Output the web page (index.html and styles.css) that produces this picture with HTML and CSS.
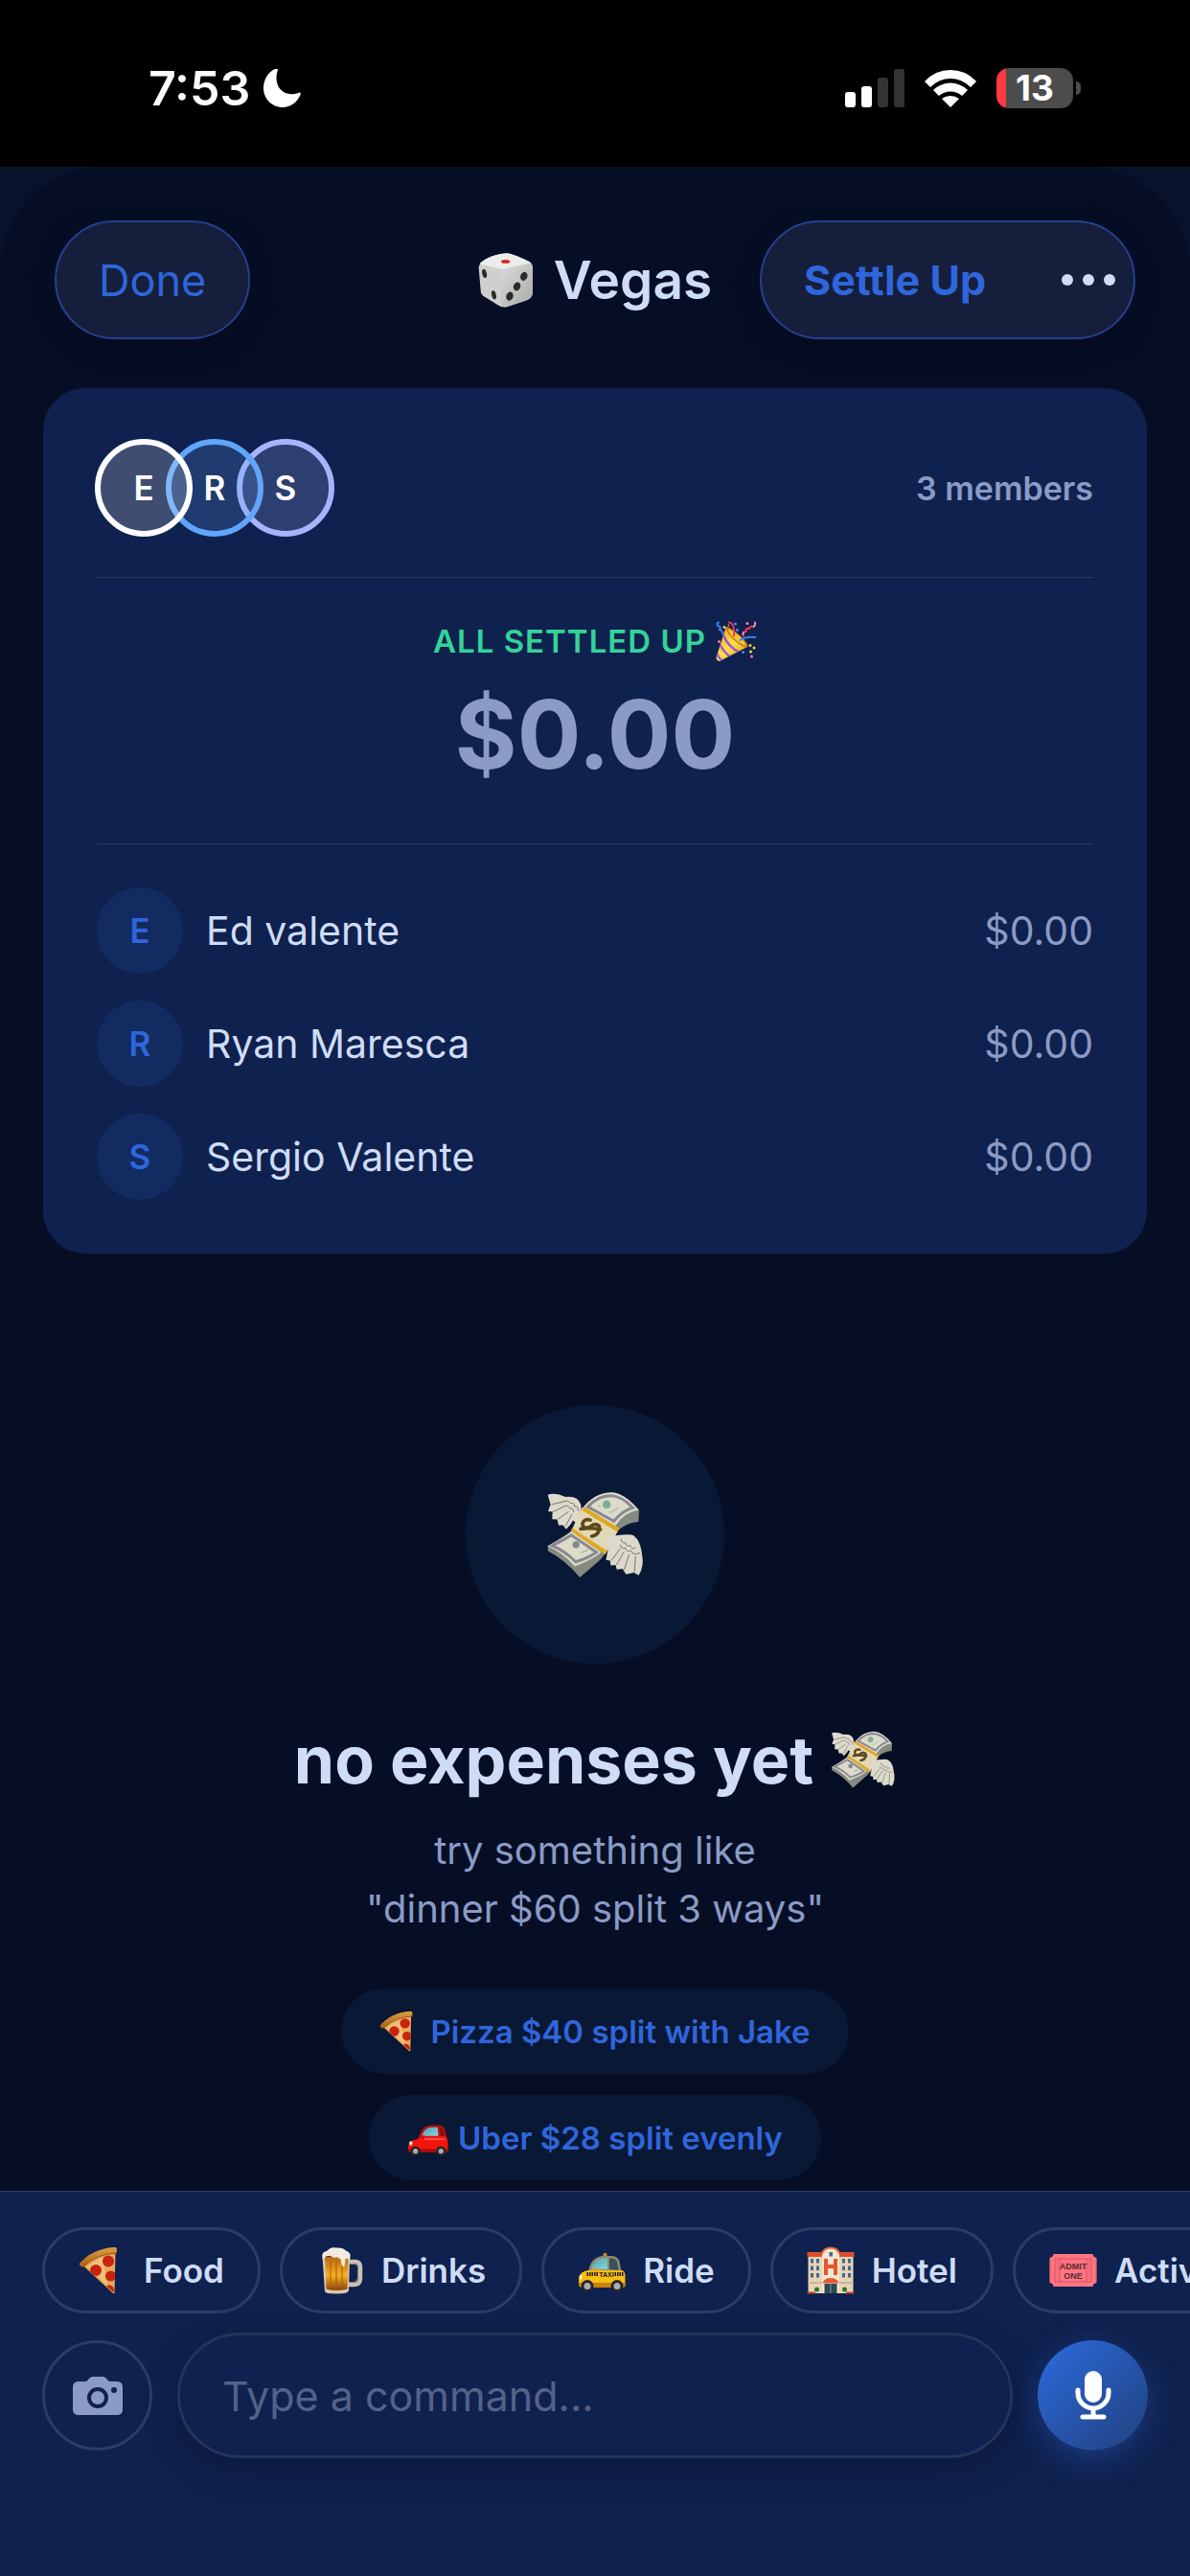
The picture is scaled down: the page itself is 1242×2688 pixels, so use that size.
FILE: index.html
```
<!DOCTYPE html>
<html lang="en">
<head>
  <meta charset="UTF-8">
  <meta name="viewport" content="width=device-width, initial-scale=1">
  <title>Vegas</title>
  <link rel="stylesheet" href="styles.css">
</head>
<body>

<!-- emoji sprites -->
<svg class="sprites" aria-hidden="true">
  <defs>
    <linearGradient id="g-crust" x1="0" y1="0" x2="0" y2="1"><stop offset="0" stop-color="#e0a040"/><stop offset="1" stop-color="#a85d14"/></linearGradient>
    <linearGradient id="g-beer" x1="0" y1="0" x2="0" y2="1"><stop offset="0" stop-color="#b8690f"/><stop offset=".55" stop-color="#f7b124"/><stop offset="1" stop-color="#8a4208"/></linearGradient>
    <linearGradient id="g-glass" x1="0" y1="0" x2="1" y2="1"><stop offset="0" stop-color="#49a5b5"/><stop offset="1" stop-color="#8fd3da"/></linearGradient>
    <linearGradient id="g-cone" x1="0" y1="0" x2="1" y2="1"><stop offset="0" stop-color="#e09a1c"/><stop offset=".5" stop-color="#ffe14a"/><stop offset="1" stop-color="#d68f18"/></linearGradient>
    <linearGradient id="g-die" x1="0" y1="0" x2="1" y2="1"><stop offset="0" stop-color="#dcdcdb"/><stop offset="1" stop-color="#a9a9a8"/></linearGradient>
    <clipPath id="c-pizza"><path d="M7 38Q38 13 77 12L75 98z"/></clipPath>
    <clipPath id="c-cone"><path d="M21 14Q50 22 66 54L8 84Q1 82 1 76z"/></clipPath>
  </defs>

  <symbol id="money" viewBox="395 324 310 310">
    <path fill="#858a80" d="M400 514L401 530Q455 558 501 613L555 566Q570 556 584 532L622 464Q650 440 685 438L687 402L600 346L515 392L472 470z"/>
    <path fill="#dcdcc9" d="M400 514Q448 492 474 468L568 534Q540 558 485 578Q446 534 400 514z"/>
    <path fill="none" stroke="#8b8794" stroke-width="9" d="M414 513Q450 496 474 480L553 534Q528 552 488 564Q455 530 414 513z"/>
    <path fill="#dcdcc9" d="M512 392Q550 346 600 346Q640 347 686 401Q640 408 612 452z"/>
    <path fill="none" stroke="#8b8794" stroke-width="9" d="M526 391Q556 356 599 356Q634 359 667 394Q632 405 608 436z"/>
    <circle cx="489" cy="510" r="11" fill="#85868a"/>
    <circle cx="585" cy="384" r="13" fill="#7bb096"/>
    <path stroke="#8aac95" stroke-width="3" d="M505 535l22-8M596 410l26-16M566 392l-8-6"/>
    <path fill="#dfd9b8" d="M508 392L624 460L581 540L474 468z"/>
    <path fill="#e2a81f" d="M514 391L625 459L617 469L508 402zM477 458L585 529L579 540L473 468z"/>
    <path fill="none" stroke="#5f471b" stroke-width="11" stroke-linecap="round" d="M531 433Q511 429 508 447Q512 466 532 455Q548 438 561 449Q566 477 541 483M504 464Q536 456 566 459" transform="rotate(6 535 457)"/>
    <path fill="#dedacb" d="M400 353Q425 346 456 360Q495 356 504 384Q507 405 490 442L479 434L472 446L458 462L448 449L434 449L430 431L414 430L415 407L401 405L409 384z"/>
    <path fill="none" stroke="#77776f" stroke-width="3" d="M450 374q14-6 22 6q12-3 12 10q14-2 11 14M453 389q12-5 17 8q12-3 11 12M412 384l42-10M416 407l38-18M432 430l34-24M456 452l20-38"/>
    <path fill="#dedacb" d="M588 486Q634 476 664 479Q690 490 696 540Q704 576 686 606L670 598L646 603L635 586L617 588L613 574L598 575L596 560L583 558L590 522z"/>
    <path fill="none" stroke="#77776f" stroke-width="3" d="M630 492q4 16 14 11q2 17 15 9q4 16 17 7M628 510q4 16 16 10q4 16 16 8q10 18 30 8M600 560l28-38M616 574l24-42M640 590l16-50M672 598l4-52"/>
  </symbol>

  <symbol id="dice" viewBox="118 72 176 176">
    <path fill="#cfcfce" d="M124 110Q150 82 208 76Q224 76 280 102Q292 108 291 126V202Q288 220 270 225L208 246Q190 248 178 238L136 212Q126 206 126 192L120 122Q120 116 124 110z"/>
    <path fill="#ececeb" d="M124 107Q150 82 208 76Q224 76 282 104Q284 108 270 111L212 123Q196 128 186 124L126 111z"/>
    <path fill="url(#g-die)" d="M190 142Q192 129 206 125L276 109Q291 107 291 124V202Q288 220 270 225L208 246Q190 246 189 234z"/>
    <ellipse cx="205" cy="102" rx="14" ry="6" fill="#e0201c"/>
    <g fill="#2b2b2b">
      <ellipse cx="138" cy="140" rx="7" ry="14" transform="rotate(-14 138 140)"/>
      <ellipse cx="168" cy="208" rx="7" ry="14" transform="rotate(-14 168 208)"/>
      <ellipse cx="263" cy="149" rx="11" ry="14" transform="rotate(20 263 149)"/>
      <ellipse cx="241" cy="181" rx="11" ry="14" transform="rotate(20 241 181)"/>
      <ellipse cx="218" cy="212" rx="11" ry="14" transform="rotate(20 218 212)"/>
    </g>
  </symbol>

  <symbol id="pizza" viewBox="0 0 100 100">
    <path fill="#e9ab57" d="M7 38Q38 13 77 12L75 98Q73 100 70 96z"/>
    <path fill="#f0c07c" d="M18 42L50 22L60 82z"/>
    <g fill="#c8230f" clip-path="url(#c-pizza)">
      <circle cx="62" cy="31" r="12"/><circle cx="36" cy="50" r="12"/><circle cx="67" cy="62" r="11"/><circle cx="64" cy="91" r="10"/>
    </g>
    <path fill="url(#g-crust)" d="M1 37Q28 5 74 2Q80 1 80 6V13Q40 14 12 41Q9 44 6 43z"/>
    <path fill="none" stroke="#8d4b10" stroke-width="2" d="M12 41Q40 15 80 14"/>
  </symbol>

  <symbol id="beer" viewBox="0 0 100 100">
    <path fill="none" stroke="#c9bfb4" stroke-width="9" d="M66 32H82Q92 33 92 43V66Q92 79 80 80H66"/>
    <path fill="none" stroke="#8c8177" stroke-width="2" d="M68 37H80Q87 38 87 45V65Q86 74 78 75H68"/>
    <path fill="#d8c9b6" d="M13 22H70L68 92Q68 99 42 99Q18 99 18 94z"/>
    <path fill="url(#g-beer)" d="M18 22H67L65 89Q42 95 21 89z"/>
    <path stroke="#a35a0c" stroke-width="2" d="M30 30V86M42 30V88M54 30V86"/>
    <path fill="#f1ebe2" d="M13 24Q10 12 22 10Q30 0 42 3Q56 2 62 9Q74 13 71 24Q70 31 66 27Q64 23 61 27Q60 45 56 42Q52 40 52 28Q44 20 38 24Q26 17 18 23Q15 30 13 24z"/>
  </symbol>

  <symbol id="car" viewBox="0 0 100 100">
    <path fill="#b60d0b" d="M26 54Q34 20 60 20H76Q92 20 94 40L97 58z"/>
    <path fill="url(#g-glass)" d="M34 48Q42 26 58 25H74L76 48z"/>
    <path fill="#6b1413" d="M80 25Q88 28 89 48H82z"/>
    <path fill="#f5130d" d="M2 72Q4 56 24 54L38 46H92Q99 50 99 64V82Q98 86 90 86H8Q1 84 2 76z"/>
    <path fill="#a60b08" d="M2 78H99V82Q98 86 90 86H8Q1 84 2 78z"/>
    <path stroke="#ff7a70" stroke-width="3" stroke-linecap="round" d="M42 54H90"/>
    <g fill="#24262a"><circle cx="20" cy="83" r="12"/><circle cx="82" cy="83" r="12"/></g>
    <g fill="#a9adb1"><circle cx="20" cy="83" r="6"/><circle cx="82" cy="83" r="6"/></g>
    <ellipse cx="38" cy="49" rx="5" ry="4" fill="#d30f0c"/>
    <ellipse cx="9" cy="64" rx="4" ry="5" fill="#ffe3df"/>
  </symbol>

  <symbol id="hotel" viewBox="0 0 100 100">
    <path fill="#e9d3b6" d="M3 20H97V98H3z"/>
    <path fill="#d9502a" d="M1 12H34V22H1zM66 12H99V22H66z"/>
    <path fill="#f5e6d0" d="M32 98V14Q36 2 50 2Q64 2 68 14V98z"/>
    <path fill="none" stroke="#e0613a" stroke-width="4" d="M31 16Q36 3 50 3Q64 3 69 16"/>
    <path fill="#3c6d8f" d="M8 26h6v9H8zM20 26h6v9h-6zM74 26h6v9h-6zM86 26h6v9h-6zM8 41h6v9H8zM20 41h6v9h-6zM74 41h6v9h-6zM86 41h6v9h-6zM8 56h6v9H8zM20 56h6v9h-6zM74 56h6v9h-6zM86 56h6v9h-6zM47 12h7v9h-7z"/>
    <path fill="none" stroke="#e4552f" stroke-width="8" d="M40 26V60M60 26V60M40 42H60"/>
    <path fill="#e25a33" d="M33 77Q36 66 50 66Q64 66 67 77z"/>
    <path fill="#2d4a50" d="M37 78H63V98H37z"/>
    <path stroke="#7d98a0" stroke-width="2" d="M50 78V98"/>
    <path fill="#c9b79c" d="M3 74H32V78H3zM68 74H97V78H68z"/>
    <g fill="#2d7a2c"><circle cx="21" cy="90" r="5"/><circle cx="79" cy="90" r="5"/></g>
    <path fill="#b9452a" d="M1 95H18V99H1zM82 95H99V99H82z"/>
  </symbol>

  <symbol id="party" viewBox="0 0 86 86">
    <path fill="url(#g-cone)" d="M21 14Q50 22 66 54L8 84Q1 82 1 76z"/>
    <path fill="none" stroke="#9a57d8" stroke-width="5" clip-path="url(#c-cone)" d="M16 30Q26 54 50 66M9 50Q18 66 32 76M2 68Q6 78 16 84"/>
    <path fill="#c98212" d="M21 14Q24 9 34 18Q56 32 66 48Q69 55 62 56Q42 46 30 32Q20 20 21 14z"/>
    <path fill="#f4c63d" d="M26 17Q38 20 52 34Q62 44 62 52Q48 46 36 34Q28 26 26 17z"/>
    <path fill="none" stroke="#f0365c" stroke-width="4" stroke-linecap="round" d="M28 3Q40 4 38 31M58 31Q54 22 63 22Q62 14 70 16Q72 10 76 12"/>
    <path fill="none" stroke="#f58ab4" stroke-width="4" stroke-linecap="round" d="M57 28l1-4M82 3q1 6-3 9"/>
    <path fill="none" stroke="#3f7df0" stroke-width="4" stroke-linecap="round" d="M6 3Q0 6 5 10Q12 12 8 18Q14 20 16 29M51 40Q62 32 83 34"/>
    <g fill="#f9d33c"><circle cx="18" cy="13" r="3"/><circle cx="72" cy="51" r="3"/><circle cx="80" cy="56" r="3"/><circle cx="73" cy="64" r="3"/></g>
    <g fill="#4a8bf2"><circle cx="41" cy="6" r="3"/><circle cx="45" cy="19" r="3"/><circle cx="57" cy="65" r="3"/></g>
    <g fill="#f07fa8"><circle cx="66" cy="5" r="3"/><circle cx="7" cy="43" r="3"/><circle cx="75" cy="74" r="3"/><circle cx="27" cy="9" r="2"/></g>
  </symbol>
</svg>

<div class="status-bar">
  <div class="status-left">
    <span class="time">7:53</span>
    <svg class="moon" viewBox="0 0 39 40"><path fill="#fff" d="M12 0C14 -0.500 15.500 0 15 1C13 6 13 12 15 17C18 24 25 27 32 26C34 26 36 25 37.500 24.500C39 24.500 39 26 38.500 27C35 35 28 40 20 40C9 40 0 31 0 20C0 11 5 3 12 0z"/></svg>
  </div>
  <div class="status-right">
    <svg class="signal" viewBox="0 0 62 40">
      <rect x="0" y="24" width="11" height="16" rx="3" fill="#fff"/>
      <rect x="17" y="18" width="11" height="22" rx="3" fill="#fff"/>
      <rect x="34" y="9" width="11" height="31" rx="3" fill="#333"/>
      <rect x="51" y="0" width="11" height="40" rx="3" fill="#333"/>
    </svg>
    <svg class="wifi" viewBox="0 0 54 39" fill="#fff">
      <path d="M0 12Q11 0 27 0T54 12L48 18Q39 9 27 9T6 18z"/>
      <path d="M9 21Q17 13.500 27 13.500T45 21L39 27Q34 22.500 27 22.500T15 27z"/>
      <path d="M18 30Q22 27 27 27T36 30L27 39z"/>
    </svg>
    <div class="battery"><span class="battery-level">13</span></div>
  </div>
</div>

<main class="sheet">
  <header class="top-bar">
    <button class="glass-btn done-btn">Done</button>
    <h1 class="title"><svg class="title-icon"><use href="#dice"/></svg>Vegas</h1>
    <div class="glass-btn actions">
      <button class="settle-btn">Settle Up</button>
      <button class="more-btn" aria-label="More">
        <svg class="dots" viewBox="0 0 58 14" fill="#cfdcf5"><circle cx="7" cy="7" r="6"/><circle cx="29" cy="7" r="6"/><circle cx="51" cy="7" r="6"/></svg>
      </button>
    </div>
  </header>

  <section class="card">
    <div class="members">
      <div class="avatars">
        <span class="avatar avatar-white">E</span>
        <span class="avatar avatar-blue">R</span>
        <span class="avatar avatar-violet">S</span>
      </div>
      <span class="member-count">3 members</span>
    </div>
    <div class="summary">
      <p class="settled">ALL SETTLED UP <svg class="emoji-sm"><use href="#party"/></svg></p>
      <p class="amount">$0.00</p>
    </div>
    <ul class="balances">
      <li><span class="initial">E</span><span class="name">Ed valente</span><span class="balance">$0.00</span></li>
      <li><span class="initial">R</span><span class="name">Ryan Maresca</span><span class="balance">$0.00</span></li>
      <li><span class="initial">S</span><span class="name">Sergio Valente</span><span class="balance">$0.00</span></li>
    </ul>
  </section>

  <section class="empty">
    <div class="empty-icon"><svg><use href="#money"/></svg></div>
    <h2>no expenses yet <svg class="heading-icon"><use href="#money"/></svg></h2>
    <p class="hint">try something like<br>"dinner $60 split 3 ways"</p>
    <div class="suggestions">
      <button class="suggestion"><svg class="emoji-sm"><use href="#pizza"/></svg>Pizza $40 split with Jake</button>
      <button class="suggestion"><svg class="emoji-sm"><use href="#car"/></svg>Uber $28 split evenly</button>
    </div>
  </section>
</main>

<footer class="composer">
  <div class="chips">
    <button class="chip"><svg class="emoji-md"><use href="#pizza"/></svg>Food</button>
    <button class="chip"><svg class="emoji-md"><use href="#beer"/></svg>Drinks</button>
    <button class="chip">
      <svg class="emoji-md" viewBox="0 0 100 100">
        <path fill="#c98a1a" d="M53 22V16Q57 11 61 16V22z"/>
        <path fill="#8d8a6a" d="M22 52Q28 22 52 20H70Q86 20 88 36L91 54z"/>
        <path fill="url(#g-glass)" d="M28 49Q34 27 50 25H62V48z"/>
        <path fill="#39515c" d="M66 25H72Q82 26 83 37L85 50L66 48z"/>
        <path fill="#f7bd12" d="M2 68Q4 52 22 50H92Q99 52 99 62V82Q98 86 90 86H8Q1 84 2 74z"/>
        <path fill="#ca8309" d="M2 76H99V82Q98 86 90 86H8Q1 84 2 76z"/>
        <path stroke="#1d1a12" stroke-width="4" stroke-dasharray="3 2" d="M19 56H42M77 56H97M19 60H42M77 60H97"/>
        <text class="taxi-text" x="60" y="64" text-anchor="middle">TAXI</text>
        <g fill="#24262a"><circle cx="20" cy="83" r="13"/><circle cx="82" cy="83" r="13"/></g>
        <g fill="#a9adb1"><circle cx="20" cy="83" r="7"/><circle cx="82" cy="83" r="7"/></g>
        <ellipse cx="37" cy="49" rx="5" ry="4" fill="#f39c0c"/>
        <ellipse cx="6" cy="64" rx="3" ry="5" fill="#fff1b8"/>
      </svg>Ride
    </button>
    <button class="chip"><svg class="emoji-md"><use href="#hotel"/></svg>Hotel</button>
    <button class="chip">
      <svg class="emoji-md" viewBox="0 0 100 100">
        <path fill="#ff7681" d="M9 16H91Q92 23 99 24V76Q92 77 91 84H9Q8 77 1 76V24Q8 23 9 16z"/>
        <path fill="none" stroke="#d94f62" stroke-width="2" d="M12 26H88V74H12zM22 26V74M78 26V74"/>
        <path fill="none" stroke="#c9566a" stroke-width="3" stroke-dasharray="2 3" d="M17 30V70M83 30V70M2 28V74M98 28V74"/>
        <text class="ticket-text" x="50" y="48" text-anchor="middle">ADMIT</text>
        <text class="ticket-text" x="50" y="67" text-anchor="middle">ONE</text>
      </svg>Activities
    </button>
  </div>
  <form class="input-row">
    <button type="button" class="camera-btn" aria-label="Camera">
      <svg viewBox="0 0 52 40">
        <path fill="#8b9bc5" fill-rule="evenodd" d="M6 5H13Q15 5 16 3Q18 0 21 0H31Q34 0 36 3Q37 5 39 5H46Q52 5 52 11V34Q52 40 46 40H6Q0 40 0 34V11Q0 5 6 5zM26 11A11 11 0 1 0 26 33A11 11 0 1 0 26 11zM43 11A3 3 0 1 0 43 17A3 3 0 1 0 43 11z"/>
        <circle cx="26" cy="22" r="7" fill="#8b9bc5"/>
      </svg>
    </button>
    <input class="command" type="text" placeholder="Type a command..." aria-label="Command">
    <button type="button" class="mic-btn" aria-label="Record">
      <svg viewBox="0 0 38 51">
        <rect x="10" y="0" width="18" height="33" rx="9" fill="#fff"/>
        <path fill="none" stroke="#fff" stroke-width="5" stroke-linecap="round" d="M3 20V23A16 16 0 0 0 35 23V20M19 40V48M8 48H30"/>
      </svg>
    </button>
  </form>
</footer>

</body>
</html>
```

FILE: styles.css
```
* { box-sizing: border-box; }
body {
  margin: 0;
  min-height: 100vh;
  display: flex;
  flex-direction: column;
  background: #08132b;
  color: #cfdcf5;
  font-family: Inter, "Liberation Sans", sans-serif;
  font-size: 41px;
  overflow-x: hidden;
}
h1, h2, p, ul { margin: 0; padding: 0; }
button, input { font: inherit; color: inherit; }
button {
  border: none;
  background: none;
  padding: 0;
  cursor: pointer;
}
svg { display: block; flex: none; }
.sprites { position: absolute; width: 0; height: 0; }
.emoji-sm { width: 43px; height: 43px; }
.emoji-md { width: 50px; height: 50px; }
.taxi-text { font: bold 14px "Liberation Sans", sans-serif; fill: #1d1a12; }
.ticket-text { font: bold 18px "Liberation Sans", sans-serif; fill: #5a2732; }

/* status bar */
.status-bar {
  height: 174px;
  padding: 10px 114px 0 155px;
  background: #000;
  color: #fff;
  display: flex;
  justify-content: space-between;
  align-items: center;
}
.status-left { display: flex; align-items: center; gap: 14px; }
.time { font-size: 50px; font-weight: 600; }
.moon { width: 39px; height: 40px; }
.status-right { display: flex; align-items: center; gap: 21px; }
.signal { width: 62px; height: 40px; }
.wifi { width: 54px; height: 39px; }
.battery { display: flex; align-items: center; gap: 3px; }
.battery::after {
  content: "";
  width: 5px;
  height: 14px;
  border-radius: 0 5px 5px 0;
  background: #4c4c4c;
}
.battery-level {
  width: 80px;
  height: 42px;
  border-radius: 13px;
  background: linear-gradient(90deg, #ff3b3f 10px, #4c4c4c 10px);
  font-size: 37px;
  font-weight: 700;
  line-height: 42px;
  text-align: center;
}

/* sheet */
.sheet {
  flex: 1;
  padding: 56px 45px 10px;
  border-radius: 110px 110px 0 0;
  background: #060e26;
}
.top-bar {
  display: grid;
  grid-template-columns: 1fr auto 1fr;
  align-items: center;
  padding: 0 12px;
}
.glass-btn {
  height: 124px;
  border: 2px solid #24418f;
  border-radius: 62px;
  background: #151f3c;
  color: #2f66dc;
  box-shadow: 0 10px 30px rgba(0, 0, 0, 0.15);
}
.done-btn {
  justify-self: start;
  padding: 0 44px;
  font-size: 45px;
}
.title {
  display: flex;
  align-items: center;
  gap: 21px;
  font-size: 55px;
  font-weight: 600;
}
.title-icon { width: 58px; height: 58px; }
.actions {
  justify-self: end;
  display: flex;
  align-items: center;
  gap: 78px;
  padding: 0 18px 0 44px;
}
.settle-btn { font-size: 43px; font-weight: 700; }
.dots { width: 58px; height: 14px; }

/* group card */
.card {
  margin-top: 51px;
  padding: 53px 56px 56px;
  border-radius: 44px;
  background: #0f214e;
}
.members {
  display: flex;
  justify-content: space-between;
  align-items: center;
  padding-bottom: 42px;
  border-bottom: 1px solid #2c3a5c;
}
.avatars { display: flex; margin-left: -2px; }
.avatar {
  width: 102px;
  height: 102px;
  border: 6px solid;
  border-radius: 50%;
  color: #fff;
  font-size: 35px;
  font-weight: 600;
  line-height: 90px;
  text-align: center;
}
.avatar + .avatar { margin-left: -28px; }
.avatar-white { z-index: 3; border-color: #fff; background: rgba(255, 255, 255, 0.2); }
.avatar-blue { z-index: 2; border-color: #60a5fa; background: rgba(96, 165, 250, 0.2); }
.avatar-violet { z-index: 1; border-color: #a5b4fc; background: rgba(165, 180, 252, 0.2); }
.member-count { color: #8b9bc5; font-size: 34px; font-weight: 600; }
.summary {
  display: flex;
  flex-direction: column;
  align-items: center;
  gap: 10px;
  padding: 35px 0 58px;
  border-bottom: 1px solid #2c3a5c;
}
.settled {
  display: flex;
  align-items: center;
  gap: 10px;
  color: #34d399;
  font-size: 33px;
  font-weight: 600;
  letter-spacing: 1px;
  line-height: 62px;
}
.amount {
  color: #8b9bc5;
  font-size: 99px;
  font-weight: 700;
  line-height: 112px;
}
.balances {
  display: flex;
  flex-direction: column;
  gap: 28px;
  padding-top: 45px;
  list-style: none;
}
.balances li { display: flex; align-items: center; gap: 24px; }
.initial {
  width: 90px;
  height: 90px;
  border-radius: 50%;
  background: #122c62;
  color: #2f66dc;
  font-size: 35px;
  font-weight: 600;
  line-height: 90px;
  text-align: center;
}
.balance { margin-left: auto; color: #8b9bc5; }

/* empty state */
.empty {
  display: flex;
  flex-direction: column;
  align-items: center;
  padding-top: 158px;
  text-align: center;
}
.empty-icon {
  width: 270px;
  height: 270px;
  display: grid;
  place-items: center;
  border-radius: 50%;
  background: #091835;
}
.empty-icon svg { width: 103px; height: 103px; }
.empty h2 {
  display: flex;
  align-items: center;
  gap: 18px;
  margin-top: 60px;
  font-size: 68px;
  line-height: 80px;
}
.heading-icon { width: 68px; height: 68px; }
.hint {
  margin-top: 24px;
  color: #8b9bc5;
  font-size: 40px;
  line-height: 61px;
}
.suggestions {
  display: flex;
  flex-direction: column;
  align-items: center;
  gap: 22px;
  margin-top: 53px;
}
.suggestion {
  height: 89px;
  display: flex;
  align-items: center;
  gap: 10px;
  padding: 0 40px;
  border-radius: 45px;
  background: #091835;
  color: #2f66dc;
  font-size: 33px;
  font-weight: 600;
}

/* composer */
.composer {
  padding: 37px 44px 123px;
  border-top: 1px solid #2c3a5c;
  background: #0f214e;
}
.chips {
  display: flex;
  gap: 20px;
  margin-right: -44px;
  overflow: hidden;
}
.chip {
  flex: none;
  height: 90px;
  display: flex;
  align-items: center;
  gap: 18px;
  padding: 0 35px;
  border: 3px solid #2a3c6b;
  border-radius: 45px;
  font-size: 35px;
  font-weight: 600;
}
.input-row {
  display: flex;
  align-items: center;
  gap: 26px;
  margin-top: 20px;
}
.camera-btn, .mic-btn {
  flex: none;
  width: 115px;
  height: 115px;
  display: grid;
  place-items: center;
  border-radius: 50%;
}
.camera-btn { border: 3px solid #2a3c6b; }
.camera-btn svg { width: 52px; height: 40px; }
.mic-btn {
  background: linear-gradient(135deg, #2d6be0, #20407c);
  box-shadow: 0 10px 34px rgba(45, 107, 224, 0.35);
}
.mic-btn svg { width: 38px; height: 51px; }
.command {
  flex: 1;
  min-width: 0;
  height: 131px;
  padding: 0 44px;
  border: 3px solid #24345c;
  border-radius: 66px;
  background: #0f214e;
  box-shadow: 0 12px 36px rgba(0, 0, 0, 0.25);
  font-size: 43px;
}
.command::placeholder { color: #53628a; opacity: 1; }
```
